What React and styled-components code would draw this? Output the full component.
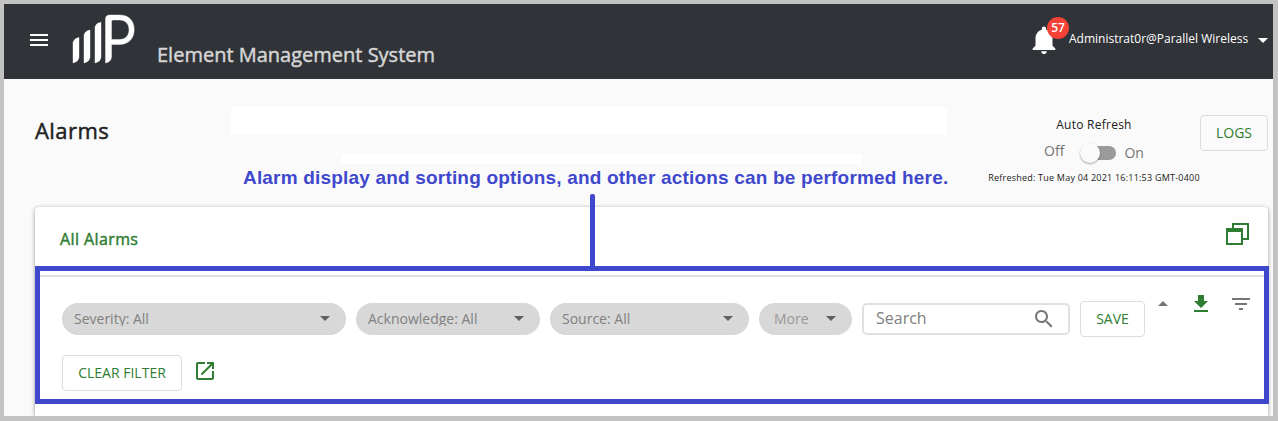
import React from "react";
import styled, { createGlobalStyle } from "styled-components";

const GlobalStyle = createGlobalStyle`
  * { box-sizing: border-box; }
  body {
    margin: 0;
    font-family: "Open Sans", "Noto Sans", sans-serif;
    overflow: hidden;
  }
`;

const Frame = styled.div`
  position: relative;
  width: 1278px;
  height: 421px;
  border: solid #c3c3c3;
  border-width: 4px 5px 5px 4px;
  background: #fafafa;
  overflow: hidden;
  display: flex;
  flex-direction: column;
`;

const Label = styled.span`
  display: block;
  white-space: nowrap;
  font-size: ${(p) => p.$size}px;
  line-height: ${(p) => p.$line || 20}px;
  font-weight: 400;
  letter-spacing: ${(p) => p.$spacing || 0}px;
  color: ${(p) => p.$color || "#212121"};
`;

/* Medium weight: the regular face, slightly thickened. */
const Heading = styled(Label)`
  -webkit-text-stroke: 0.45px currentColor;
`;

const Header = styled.header`
  display: flex;
  align-items: flex-start;
  height: 75px;
  flex: none;
  background: #303338;
  padding-left: 23px;
`;

const Icon = styled.svg`
  display: block;
  flex: none;
  width: ${(p) => p.$size || 24}px;
  height: ${(p) => p.$size || 24}px;
  fill: ${(p) => p.$color || "#757575"};
`;

const MenuButton = styled.div`
  margin-top: 24px;
`;

const Logo = styled.svg`
  display: block;
  width: 63px;
  height: 50px;
  margin: 10px 0 0 21px;
  fill: #fff;
  stroke: #fff;
  stroke-width: 0.4px;
`;

const Title = styled(Heading)`
  margin: 37px 0 0 22px;
`;

const Account = styled.div`
  display: flex;
  align-items: flex-start;
  margin-left: auto;
  margin-right: -2px;
`;

const Bell = styled.div`
  position: relative;
  width: 42px;
  padding-top: 19px;
`;

const Badge = styled.span`
  position: absolute;
  left: 20px;
  top: 13px;
  width: 22px;
  height: 22px;
  border-radius: 50%;
  background: #f44336;
  color: #fff;
  font-size: 12px;
  font-weight: 600;
  line-height: 21px;
  text-align: center;
`;

const UserName = styled(Label)`
  width: 182px;
  margin-top: 25px;
`;

const Caret = styled.div`
  margin-top: 24px;
`;

const PageHead = styled.section`
  display: flex;
  align-items: flex-start;
  height: 128px;
  flex: none;
  padding: 0 5px 0 31px;
`;

const PageTitle = styled(Heading)`
  margin-top: 36px;
`;

const Refresh = styled.div`
  width: 212px;
  margin-left: auto;
  padding-top: 36px;
  display: flex;
  flex-direction: column;
  align-items: center;
`;

const SwitchRow = styled.div`
  display: flex;
  height: 28px;
  margin-top: 6px;
`;

const Track = styled.div`
  width: 34px;
  height: 14px;
  margin: 5px 8px 0 18px;
  border-radius: 7px;
  background: #9a9a9a;
`;

const Thumb = styled.div`
  width: 20px;
  height: 20px;
  margin-left: -2px;
  transform: translateY(-3px);
  border-radius: 50%;
  background: #fafafa;
  box-shadow: 0 1px 2px rgba(0, 0, 0, 0.35);
`;

const OnLabel = styled(Label)`
  margin-top: 2px;
`;

const Stamp = styled(Label)`
  margin-top: -1px;
`;

const Button = styled.button`
  width: ${(p) => p.$width}px;
  height: 36px;
  flex: none;
  padding: 0;
  border: 1px solid #dcdcdc;
  border-radius: 4px;
  background: transparent;
  color: #2e7d32;
  font: 400 14px/34px "Open Sans", sans-serif;
  white-space: nowrap;
`;

const LogsSlot = styled.div`
  margin-top: 36px;
`;

const Card = styled.section`
  flex: 1;
  margin: 0 5px 0 31px;
  background: #fff;
  border-radius: 4px 4px 0 0;
  box-shadow: 0 1px 4px rgba(0, 0, 0, 0.4);
`;

const CardHead = styled.div`
  display: flex;
  justify-content: space-between;
  height: 70px;
  padding: 16px 19px 0 25px;
  border-bottom: 2px solid #e0e0e0;
`;

const CardTitle = styled(Heading)`
  margin-top: 6px;
`;

const Toolbar = styled.div`
  display: flex;
  align-items: flex-start;
  padding: 15px 15px 0 27px;
`;

const Filters = styled.div`
  display: flex;
  flex-wrap: wrap;
  align-items: center;
  column-gap: 10px;
  row-gap: 18px;
  width: 1083px;
  margin-top: 9px;
`;

const Chip = styled.div`
  display: flex;
  align-items: center;
  justify-content: space-between;
  width: ${(p) => p.$width}px;
  height: 32px;
  padding: 0 9px 0 ${(p) => p.$inset || 12}px;
  border-radius: 16px;
  background: #d8d8d8;
`;

const ChipText = styled(Label)`
  height: 16px;
  overflow: hidden;
  margin-bottom: 2px;
`;

const ChipCaret = styled.div`
  margin-bottom: 2px;
`;

const SearchBox = styled.div`
  display: flex;
  justify-content: space-between;
  width: 208px;
  height: 32px;
  padding: 2px 12px 0;
  border: 2px solid #e0e0e0;
  border-radius: 5px;
`;

const SearchText = styled(Label)`
  margin-top: 1px;
`;

const OpenSlot = styled.div`
  margin: 0 0 4px 1px;
`;

const Actions = styled.div`
  display: flex;
  margin-left: 6px;
`;

const ActionSlot = styled.div`
  margin-right: ${(p) => p.$gap || 0}px;
`;

const Patch = styled.div`
  position: absolute;
  left: ${(p) => p.$x}px;
  top: ${(p) => p.$y}px;
  width: ${(p) => p.$w}px;
  height: ${(p) => p.$h}px;
  background: #fff;
`;

const Note = styled.div`
  position: absolute;
  left: 239px;
  top: 163px;
  font: 700 19px/22px "Liberation Sans", Arial, sans-serif;
  letter-spacing: 0.185px;
  color: #3f48cc;
  white-space: nowrap;
`;

const Connector = styled.div`
  position: absolute;
  left: 586px;
  top: 190px;
  width: 5px;
  height: 74px;
  border-radius: 2px 2px 0 0;
  background: #3f48cc;
`;

const Highlight = styled.div`
  position: absolute;
  left: 31px;
  top: 262px;
  width: 1234px;
  height: 138px;
  border: 5px solid #3f48cc;
`;

const Glyph = ({ d, size, color, label }) => (
  <Icon viewBox="0 0 24 24" $size={size} $color={color} aria-label={label}>
    <path d={d} />
  </Icon>
);

const DOWN = "M7 10l5 5 5-5z";

const FilterChip = ({ width, inset, color, children }) => (
  <Chip $width={width} $inset={inset}>
    <ChipText $size={14} $line={18} $color={color || "#808080"}>
      {children}
    </ChipText>
    <ChipCaret>
      <Glyph d={DOWN} color="#616161" />
    </ChipCaret>
  </Chip>
);

export default function App() {
  return (
    <Frame>
      <GlobalStyle />
      <Header>
        <MenuButton>
          <Glyph label="Menu" color="#fff" d="M3 18h18v-2H3v2zm0-5h18v-2H3v2zm0-7v2h18V6H3z" />
        </MenuButton>
        <Logo viewBox="0 0 63 50">
          <path d="M1 49V28.500Q2 24.300 7 23.500V43.500Q6 48.200 1 49Z" />
          <path d="M12 49V21Q13 16.800 18 16V43.500Q17 48.200 12 49Z" />
          <path d="M23 49V13Q24 9 29 8.200V43.500Q28 48.200 23 49Z" />
          <path
            fillRule="evenodd"
            d="M33.500 49V5Q33.500 1 38 1H47.500C57 1 62.200 7 62.200 15.500S57 30.500 47.500 30.500H39.500V43Q39 48.200 33.500 49ZM39.500 25.500H47.500C53.500 25.500 57 21.500 57 15.700S53.500 6 47.500 6H41Q39.500 6 39.500 7.500Z"
          />
        </Logo>
        <Title $size={20} $line={28} $color="#d6d6d6">
          Element Management System
        </Title>
        <Account>
          <Bell>
            <Glyph
              label="Notifications"
              size={34}
              color="#fff"
              d="M12 22c1.100 0 2-.9 2-2h-4c0 1.100.89 2 2 2zm6-6v-5c0-3.070-1.640-5.640-4.500-6.320V4c0-.83-.67-1.500-1.500-1.500s-1.500.67-1.500 1.500v.68C7.630 5.360 6 7.920 6 11v5l-2 2v1h16v-1l-2-2z"
            />
            <Badge>57</Badge>
          </Bell>
          <UserName $size={12} $color="#fff">
            Administrat0r@Parallel Wireless
          </UserName>
          <Caret>
            <Glyph d={DOWN} color="#fff" />
          </Caret>
        </Account>
      </Header>

      <PageHead>
        <PageTitle $size={22} $line={30} $spacing={0.45}>
          Alarms
        </PageTitle>
        <Refresh>
          <Label $size={12} $spacing={0.25}>
            Auto Refresh
          </Label>
          <SwitchRow>
            <Label $size={14} $color="#757575">
              Off
            </Label>
            <Track>
              <Thumb />
            </Track>
            <OnLabel $size={14} $color="#757575">
              On
            </OnLabel>
          </SwitchRow>
          <Stamp $size={9} $spacing={0.22}>
            Refreshed: Tue May 04 2021 16:11:53 GMT-0400
          </Stamp>
        </Refresh>
        <LogsSlot>
          <Button $width={68}>LOGS</Button>
        </LogsSlot>
      </PageHead>

      <Card>
        <CardHead>
          <CardTitle $size={16} $spacing={0.4} $color="#2e7d32">
            All Alarms
          </CardTitle>
          <Icon viewBox="0 0 24 24" $color="#2e7d32" aria-label="Restore">
            <path d="M7 5V0H24V17H18V15H22V2H9V5Z" />
            <path fillRule="evenodd" d="M1 5H18V22H1ZM3 9V20H16V9Z" />
          </Icon>
        </CardHead>
        <Toolbar>
          <Filters>
            <FilterChip width={284}>Severity: All</FilterChip>
            <FilterChip width={184}>Acknowledge: All</FilterChip>
            <FilterChip width={199}>Source: All</FilterChip>
            <FilterChip width={93} inset={15} color="#999">
              More
            </FilterChip>
            <SearchBox>
              <SearchText $size={16} $color="#808080">
                Search
              </SearchText>
              <Glyph d="M15.500 14h-.79l-.28-.27C15.410 12.590 16 11.110 16 9.500 16 5.910 13.090 3 9.500 3S3 5.910 3 9.500 5.910 16 9.500 16c1.610 0 3.090-.59 4.230-1.570l.27.28v.79l5 4.990L20.490 19l-4.990-5zm-6 0C7.010 14 5 11.990 5 9.500S7.010 5 9.500 5 14 7.010 14 9.500 11.990 14 9.500 14z" />
            </SearchBox>
            <Button $width={65}>SAVE</Button>
            <Button $width={120}>CLEAR FILTER</Button>
            <OpenSlot>
              <Glyph
                color="#2e7d32"
                d="M19 19H5V5h7V3H5c-1.110 0-2 .9-2 2v14c0 1.100.89 2 2 2h14c1.100 0 2-.9 2-2v-7h-2v7zM14 3v2h3.590l-9.830 9.830 1.410 1.410L19 6.410V10h2V3h-7z"
              />
            </OpenSlot>
          </Filters>
          <Actions>
            <ActionSlot $gap={14}>
              <Glyph d="M7 14l5-5 5 5z" />
            </ActionSlot>
            <ActionSlot $gap={16}>
              <Glyph color="#2e7d32" d="M19 9h-4V3H9v6H5l7 7 7-7zM5 18v2h14v-2H5z" />
            </ActionSlot>
            <Glyph d="M10 18h4v-2h-4v2zM3 6v2h18V6H3zm3 7h12v-2H6v2z" />
          </Actions>
        </Toolbar>
      </Card>

      <Patch $x={227} $y={103} $w={716} $h={28} />
      <Patch $x={337} $y={150} $w={521} $h={10} />
      <Note>Alarm display and sorting options, and other actions can be performed here.</Note>
      <Connector />
      <Highlight />
    </Frame>
  );
}
